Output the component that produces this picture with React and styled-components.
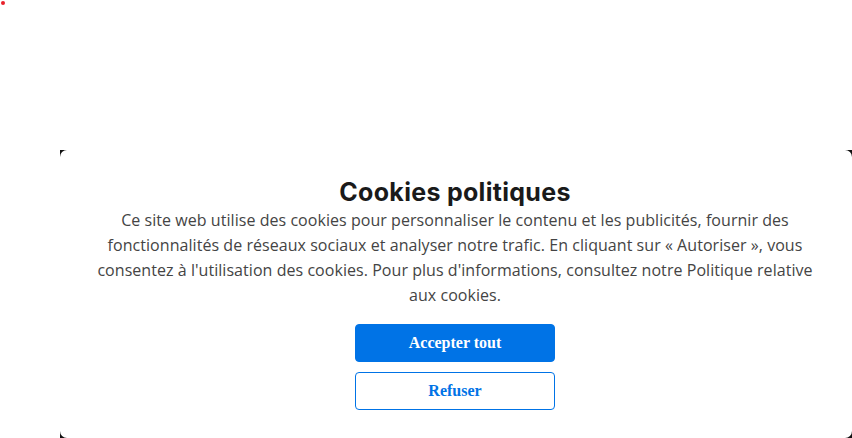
import React from "react";
import styled, { createGlobalStyle } from "styled-components";

const GlobalStyle = createGlobalStyle`
  html, body {
    margin: 0;
    padding: 0;
    background: #ffffff;
  }
  * {
    box-sizing: border-box;
  }
`;

const App = () => {
  return (
    <Page>
      <GlobalStyle />
      <Dot />
      <Backdrop>
        <Card>
          <Title>Cookies politiques</Title>
          <Text>
            Ce site web utilise des cookies pour personnaliser le contenu et les
            publicités, fournir des fonctionnalités de réseaux sociaux et
            analyser notre trafic. En cliquant sur « Autoriser », vous consentez
            à l'utilisation des cookies. Pour plus d'informations, consultez
            notre Politique relative aux cookies.
          </Text>
          <Actions>
            <Button primary>Accepter tout</Button>
            <Button>Refuser</Button>
          </Actions>
        </Card>
      </Backdrop>
    </Page>
  );
};

const Page = styled.div`
  position: relative;
  width: 852px;
  height: 438px;
  overflow: hidden;
  padding: 150px 0 0 60px;
`;

const Dot = styled.span`
  position: absolute;
  top: 1px;
  left: 1px;
  width: 4px;
  height: 4px;
  border-radius: 50%;
  background: #e8202a;
`;

const Backdrop = styled.div`
  width: 792px;
  height: 288px;
  background: #111111;
`;

const Card = styled.div`
  height: 100%;
  background: #ffffff;
  border-radius: 7px;
  padding: 26px 37px 0 35px;
  display: flex;
  flex-direction: column;
  align-items: center;
`;

const Title = styled.h2`
  margin: 0;
  font-family: "Inter", "Liberation Sans", sans-serif;
  font-weight: 700;
  font-size: 25px;
  letter-spacing: 0.3px;
  line-height: 32px;
  color: #1a1a1a;
`;

const Text = styled.p`
  margin: 0;
  font-family: "Open Sans", "Liberation Sans", sans-serif;
  font-size: 16px;
  letter-spacing: 0.05px;
  line-height: 25px;
  color: #444444;
  text-align: center;
`;

const Actions = styled.div`
  margin-top: 16px;
  display: flex;
  flex-direction: column;
  gap: 10px;
`;

const Button = styled.button`
  width: 200px;
  height: 38px;
  border-radius: 4px;
  border: 1px solid #0073e6;
  background: ${({ primary }) => (primary ? "#0073e6" : "#ffffff")};
  color: ${({ primary }) => (primary ? "#ffffff" : "#0073e6")};
  font-family: "Liberation Serif", serif;
  font-weight: 700;
  font-size: 16px;
  cursor: pointer;
`;

export default App;
